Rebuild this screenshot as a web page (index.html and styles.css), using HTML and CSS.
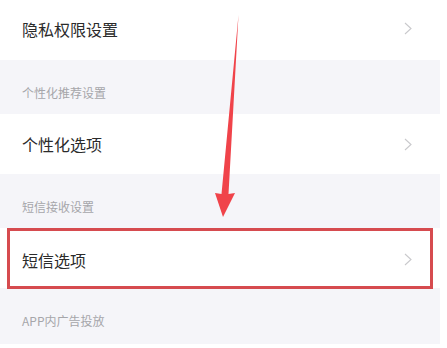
FILE: index.html
```html
<!DOCTYPE html>
<html lang="zh">
<head>
<meta charset="utf-8">
<link rel="stylesheet" href="styles.css">
</head>
<body>
<div class="page">
  <div class="list">
    <div class="row first"><span class="title">隐私权限设置</span><svg class="chev" viewBox="0 0 8 13" width="8" height="13"><polyline points="1,1 7,6.5 1,12" /></svg></div>
    <div class="section">个性化推荐设置</div>
    <div class="row"><span class="title">个性化选项</span><svg class="chev" viewBox="0 0 8 13" width="8" height="13"><polyline points="1,1 7,6.5 1,12" /></svg></div>
    <div class="section">短信接收设置</div>
    <div class="row third"><span class="title">短信选项</span><svg class="chev" viewBox="0 0 8 13" width="8" height="13"><polyline points="1,1 7,6.5 1,12" /></svg></div>
    <div class="section last">APP内广告投放</div>
  </div>
  <div class="highlight"></div>
  <svg class="arrow" viewBox="0 0 447 348" width="447" height="348">
    <polygon points="238.5,15 221.5,194 215,193 223,217 235,193 228.5,194" />
  </svg>
</div>
</body>
</html>
```

FILE: styles.css
```css
html, body {
  margin: 0;
  padding: 0;
  background: #ffffff;
}
body {
  font-family: "Noto Sans CJK SC", "Noto Sans", sans-serif;
}
.page {
  position: relative;
  width: 447px;
  height: 348px;
  overflow: hidden;
}
.list {
  width: 440px;
  display: flex;
  flex-direction: column;
  background: #f5f5f9;
}
.row {
  height: 60px;
  background: #ffffff;
  display: flex;
  align-items: center;
  justify-content: space-between;
  padding: 0 28px 0 22px;
  box-sizing: border-box;
}
.row.first {
  padding-bottom: 3px;
}
.row.third {
  padding-top: 3px;
}
.title {
  font-size: 16px;
  color: #2b2b2b;
  line-height: 20px;
}
.chev {
  fill: none;
  stroke: #c9c9cc;
  stroke-width: 1.1;
}
.section {
  height: 54px;
  box-sizing: border-box;
  padding: 25px 22px 0;
  font-size: 12px;
  line-height: 16px;
  color: #a6a6aa;
}
.section.last {
  height: 56px;
}
.highlight {
  position: absolute;
  left: 7px;
  top: 228px;
  width: 426px;
  height: 61px;
  border: 3px solid #d64b4f;
  box-sizing: border-box;
}
.arrow {
  position: absolute;
  left: 0;
  top: 0;
}
.arrow polygon {
  fill: #f0434a;
}
```
